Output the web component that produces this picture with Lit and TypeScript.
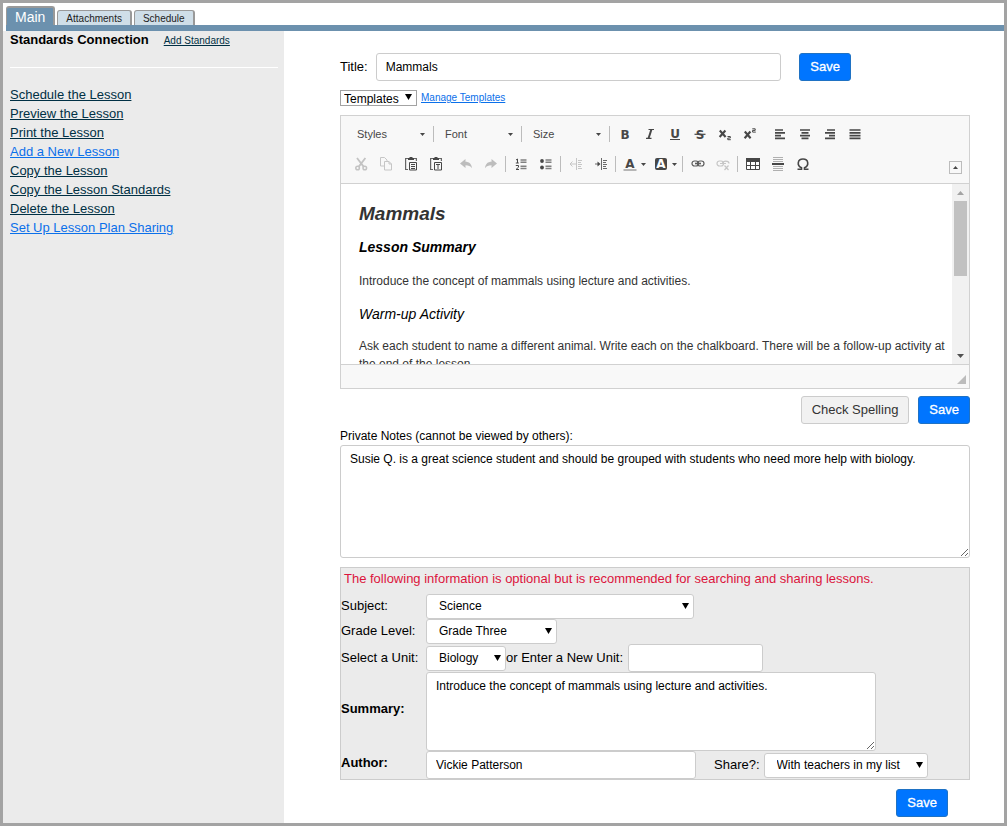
import { LitElement, html, svg, css, nothing } from "lit";
import { customElement, property } from "lit/decorators.js";

const DARK = "#474747";

const icons: Record<string, unknown> = {
  bold: svg`<text class="glyph" x="8" y="12.500">B</text>`,
  italic: svg`<path fill="none" stroke="#474747" stroke-width="1.200" d="M6.500 3.500h5.500M4 12.300h5.500"/><path stroke="#474747" stroke-width="2" d="M9.400 3.500L6.600 12.300"/>`,
  underline: svg`<text class="glyph" x="8" y="11.500">U</text><path stroke="#474747" d="M3 13.500h10"/>`,
  strike: svg`<text class="glyph" x="8" y="12.500">S</text><path stroke="#474747" stroke-width="1.200" d="M2.500 8.300h11"/>`,
  sub: svg`<path fill="none" stroke="#474747" stroke-width="2.100" d="M2.800 4.500l5.800 6.500M8.400 4.500L2.600 11"/><path fill="none" stroke="#474747" stroke-width="1" d="M10.500 10.500h2.800v1.500h-2.500v1.700h3"/>`,
  sup: svg`<path fill="none" stroke="#474747" stroke-width="2.100" d="M2.800 5.500l5.800 6.800M8.400 5.500l-5.800 6.800"/><path fill="none" stroke="#474747" stroke-width="1" d="M10.300 2.800h2.900v1.600h-2.600v1.700h3.200"/>`,
  left: svg`<path stroke="#474747" stroke-width="1.700" d="M3 4h8M3 6.800h10M3 9.600h6M3 12.400h10"/>`,
  center: svg`<path stroke="#474747" stroke-width="1.700" d="M3 4h10M4.500 6.800h7M3 9.600h10M4.500 12.400h7"/>`,
  right: svg`<path stroke="#474747" stroke-width="1.700" d="M5 4h8M3 6.800h10M7 9.600h6M3 12.400h10"/>`,
  justify: svg`<path stroke="#474747" stroke-width="1.700" d="M2.500 4h11M2.500 6.800h11M2.500 9.600h11M2.500 12.400h11"/>`,
  cut: svg`<path fill="none" stroke="#c3c3c3" stroke-width="1.800" d="M4 2l6.600 8.600M12.400 2L5.800 10.600"/><g fill="none" stroke="#c3c3c3" stroke-width="1.500"><circle cx="4.600" cy="12" r="1.800"/><circle cx="11.800" cy="12" r="1.800"/></g>`,
  copy: svg`<g fill="#f8f8f8" stroke="#c6c6c6"><path d="M2.500 1.500h4l2.500 2.500v6h-6.500z"/><path d="M6.500 5.500h4.500l2.500 2.500v6h-7z"/><path fill="none" d="M11 5.500v2.500h2.500"/></g>`,
  paste: svg`<path fill="none" stroke="#666" stroke-width="1.200" d="M5 13.500H2.600v-11h10.800V5"/><path fill="#474747" d="M5 4V2h1.500V1h3v1H11v2z"/><path fill="#f8f8f8" stroke="#474747" d="M6.500 6.500h7v7.500h-7z"/><path stroke="#474747" d="M8 8.500h4M8 10.500h4M8 12.500h4"/>`,
  pasteText: svg`<path fill="none" stroke="#666" stroke-width="1.200" d="M5 13.500H2.600v-11h10.800V5"/><path fill="#474747" d="M5 4V2h1.500V1h3v1H11v2z"/><path fill="#f8f8f8" stroke="#474747" d="M6.500 6.500h7v7.500h-7z"/><path fill="none" stroke="#474747" d="M8 8.500h4M10 8.500v4.500"/>`,
  undo: svg`<path fill="#bdbdbd" d="M2 7.500L7.500 3v2.800c3.600 0 6 2 6.500 6.400-1.500-2.200-3.500-3-6.500-3V12z"/>`,
  redo: svg`<path fill="#bdbdbd" d="M14 7.500L8.500 3v2.800c-3.600 0-6 2-6.500 6.400 1.500-2.200 3.500-3 6.500-3V12z"/>`,
  numbers: svg`<path fill="none" stroke="#474747" d="M3 4l1.500-1v4M2.800 7h3M2.800 9.500h2.700v1.700l-2.500 2.300h3"/><path stroke="#808080" stroke-width="1.500" d="M7.500 4h6M7.500 6.300h6M7.500 10.300h6M7.500 12.600h6"/>`,
  bullets: svg`<circle cx="4" cy="5" r="1.900" fill="#474747"/><circle cx="4" cy="11.500" r="1.900" fill="#474747"/><path stroke="#808080" stroke-width="1.500" d="M7.500 4h6M7.500 6.300h6M7.500 10.300h6M7.500 12.600h6"/>`,
  outdent: svg`<path fill="none" stroke="#c6c6c6" d="M8.500 2v12M2 8h6M4.500 5.500L2 8l2.500 2.500M10 4.500h4M10 6.500h3M10 8.500h4M10 10.500h3M10 12.500h4"/>`,
  indent: svg`<path fill="none" stroke="#6a6a6a" d="M8.500 2v12M2 8h4M10 4.500h4M10 6.500h3M10 8.500h4M10 10.500h3M10 12.500h4"/><path fill="#474747" d="M4.500 5.500L7.500 8l-3 2.500z"/>`,
  color: svg`<text class="glyph" x="8" y="11.500">A</text><path stroke="#a0a0a0" stroke-width="1.500" d="M1.500 14h13"/>`,
  background: svg`<rect x="2" y="2" width="12" height="12" rx="2" fill="#474747"/><text class="glyph light" x="8" y="12">A</text>`,
  link: svg`<g fill="none" stroke="#5c5c5c" stroke-width="1.200"><rect x="2" y="5" width="6.500" height="5" rx="2.500"/><rect x="7.500" y="5" width="6.500" height="5" rx="2.500"/><path stroke-width="1.600" d="M5 7.500h6"/></g>`,
  unlink: svg`<g fill="none" stroke="#c6c6c6" stroke-width="1.200"><rect x="2" y="5" width="6.500" height="5" rx="2.500"/><path d="M9 9.500M7.500 7.500c0-3.300 6.500-3.300 6.500 0M5 7.500h6M9.500 9.500l4 4.500M13.500 9.500l-4 4.500"/></g>`,
  table: svg`<path fill="#fff" stroke="#474747" d="M1.500 2.500h13v11h-13z"/><path fill="#474747" d="M1 2h14v4H1z"/><path stroke="#474747" d="M1.500 9.500h13M5.500 5v8.500M10.500 5v8.500"/>`,
  rule: svg`<path stroke="#b0b0b0" d="M3 1.500h10M3 3.500h10M3 5.500h10M3 10.500h10M3 12.500h10M3 14.500h10"/><path stroke="#474747" stroke-width="2" d="M2 8h12"/>`,
  omega: svg`<path fill="none" stroke="#474747" stroke-width="1.600" d="M2.500 13.200h4v-1.500C1.500 9.500 2.500 3 8 3s6.500 6.500 1.500 8.700v1.500h4"/>`,
};

interface Tool {
  icon: string;
  label: string;
  off?: boolean;
  menu?: boolean;
}

const firstRow: Tool[][] = [
  [
    { icon: "bold", label: "Bold" },
    { icon: "italic", label: "Italic" },
    { icon: "underline", label: "Underline" },
    { icon: "strike", label: "Strikethrough" },
    { icon: "sub", label: "Subscript" },
    { icon: "sup", label: "Superscript" },
  ],
  [
    { icon: "left", label: "Align left" },
    { icon: "center", label: "Center" },
    { icon: "right", label: "Align right" },
    { icon: "justify", label: "Justify" },
  ],
];

const clipboardTools: Tool[][] = [
  [
    { icon: "cut", label: "Cut", off: true },
    { icon: "copy", label: "Copy", off: true },
    { icon: "paste", label: "Paste" },
    { icon: "pasteText", label: "Paste as plain text" },
  ],
  [
    { icon: "undo", label: "Undo", off: true },
    { icon: "redo", label: "Redo", off: true },
  ],
];

const dividedTools: Tool[][] = [
  [
    { icon: "numbers", label: "Numbered list" },
    { icon: "bullets", label: "Bulleted list" },
  ],
  [
    { icon: "outdent", label: "Decrease indent", off: true },
    { icon: "indent", label: "Increase indent" },
  ],
  [
    { icon: "color", label: "Text color", menu: true },
    { icon: "background", label: "Background color", menu: true },
  ],
  [
    { icon: "link", label: "Link" },
    { icon: "unlink", label: "Unlink", off: true },
  ],
  [
    { icon: "table", label: "Table" },
    { icon: "rule", label: "Horizontal line" },
    { icon: "omega", label: "Special character" },
  ],
];

@customElement("lesson-editor")
export class LessonEditor extends LitElement {
  static styles = css`
    :host {
      display: block;
      border: 1px solid #d1d1d1;
      background: #f8f8f8;
    }
    .toolbar {
      display: flex;
      align-items: flex-end;
      justify-content: space-between;
      padding: 3px 7px 4px 7px;
      border-bottom: 1px solid #d1d1d1;
    }
    .row {
      display: flex;
      align-items: center;
      height: 30px;
    }
    .group {
      display: flex;
    }
    .gap {
      width: 5px;
    }
    .sep {
      width: 1px;
      height: 16px;
      margin: 0 2px;
      background: #bcbcbc;
    }
    .tool {
      display: flex;
      align-items: center;
      justify-content: center;
      gap: 3px;
      width: 25px;
      height: 24px;
      padding: 0;
      border: 0;
      background: none;
    }
    .menu {
      width: 31px;
    }
    .icon {
      width: 16px;
      height: 16px;
    }
    .glyph {
      fill: #474747;
      font: bold 12px "DejaVu Sans", Verdana, sans-serif;
      text-anchor: middle;
    }
    .light {
      fill: #fff;
    }
    .caret {
      width: 5px;
      height: 3px;
    }
    .combo {
      display: grid;
      align-items: center;
      width: 83px;
    }
    .combo > * {
      grid-area: 1 / 1;
    }
    .combo .caret {
      justify-self: end;
      margin-right: 6px;
      pointer-events: none;
    }
    .combo select {
      appearance: none;
      width: 100%;
      height: 22px;
      padding: 0 9px;
      border: 0;
      background: none;
      color: #474747;
      font: 11px "Liberation Sans", Arial, sans-serif;
    }
    .collapse {
      display: flex;
      align-items: center;
      justify-content: center;
      width: 13px;
      height: 13px;
      margin-bottom: 5px;
      padding: 0;
      border: 1px solid #bcbcbc;
      background: #f8f8f8;
    }
    .view {
      display: grid;
      grid-template-columns: 1fr 17px;
      height: 180px;
      background: #fff;
    }
    .doc {
      overflow: hidden;
      padding: 19px 6px 0 18px;
      color: #333;
      font-size: 12px;
      line-height: 18px;
      outline: none;
    }
    .doc h1,
    .doc h2,
    .doc h3,
    .doc p {
      margin: 0 0 16px;
      line-height: 18px;
    }
    .doc h1 {
      margin-bottom: 13px;
      font-size: 19px;
      line-height: 22px;
      font-style: italic;
    }
    .doc h2,
    .doc h3 {
      color: #000;
      font-size: 14px;
      font-style: italic;
    }
    .doc p {
      margin-bottom: 15px;
    }
    .doc h3 {
      margin-bottom: 14px;
      font-weight: normal;
    }
    .scroll {
      display: flex;
      flex-direction: column;
      align-items: center;
      background: #f1f1f1;
    }
    .arrow {
      width: 7px;
      height: 4px;
      margin: 7px 0 6px;
    }
    .thumb {
      width: 13px;
      height: 75px;
      margin-bottom: auto;
      background: #c1c1c1;
    }
    .status {
      display: flex;
      align-items: flex-end;
      justify-content: flex-end;
      height: 24px;
      padding: 0 3px 4px;
      box-sizing: border-box;
      border-top: 1px solid #d1d1d1;
    }
    .grip {
      width: 9px;
      height: 9px;
    }
  `;

  private caret() {
    return html`<svg class="caret" viewBox="0 0 5 3" aria-hidden="true"><path fill=${DARK} d="M0 0h5L2.5 3z" /></svg>`;
  }

  private group(tools: Tool[]) {
    return html`<div class="group">
      ${tools.map(
        (t) => html`<button class=${t.menu ? "tool menu" : "tool"} aria-label=${t.label} ?disabled=${!!t.off}>
          <svg class="icon" viewBox="0 0 16 16" aria-hidden="true">${icons[t.icon]}</svg>${t.menu ? this.caret() : nothing}
        </button>`
      )}
    </div>`;
  }

  render() {
    return html`
      <div class="toolbar">
        <div>
          <div class="row">
            ${["Styles", "Font", "Size"].map(
              (name) => html`<div class="combo">
                  <select aria-label=${name}><option>${name}</option></select>${this.caret()}
                </div>
                <span class="sep"></span>`
            )}
            ${this.group(firstRow[0])}<span class="gap"></span>${this.group(firstRow[1])}
          </div>
          <div class="row">
            ${this.group(clipboardTools[0])}<span class="gap"></span>${this.group(clipboardTools[1])}
            ${dividedTools.map((g) => html`<span class="sep"></span>${this.group(g)}`)}
          </div>
        </div>
        <button class="collapse" aria-label="Collapse toolbar">
          <svg class="caret" viewBox="0 0 5 3" aria-hidden="true"><path fill=${DARK} d="M0 3h5L2.5 0z" /></svg>
        </button>
      </div>
      <div class="view">
        <div class="doc" contenteditable="true" role="textbox" aria-multiline="true" aria-label="Lesson plan">
          <h1>Mammals</h1>
          <h2>Lesson Summary</h2>
          <p>Introduce the concept of mammals using lecture and activities.</p>
          <h3>Warm-up Activity</h3>
          <p>
            Ask each student to name a different animal. Write each on the chalkboard. There will be a follow-up
            activity at the end of the lesson.
          </p>
        </div>
        <div class="scroll" aria-hidden="true">
          <svg class="arrow" viewBox="0 0 7 4"><path fill="#a3a3a3" d="M0 4h7L3.500 0z" /></svg>
          <div class="thumb"></div>
          <svg class="arrow" viewBox="0 0 7 4"><path fill="#505050" d="M0 0h7L3.500 4z" /></svg>
        </div>
      </div>
      <div class="status">
        <svg class="grip" viewBox="0 0 9 9" aria-hidden="true"><path fill="#bcbcbc" d="M9 0v9H0z" /></svg>
      </div>
    `;
  }
}

@customElement("drop-down")
export class DropDown extends LitElement {
  static styles = css`
    :host {
      display: inline-grid;
      align-items: center;
      font-size: 12px;
    }
    select,
    svg {
      grid-area: 1 / 1;
    }
    select {
      appearance: none;
      width: 100%;
      height: 25px;
      padding: 0 12px;
      border: 1px solid #ccc;
      border-radius: 3px;
      background: #fff;
      color: #000;
      font: inherit;
    }
    svg {
      justify-self: end;
      width: 7px;
      height: 6px;
      margin: 0 5px 1px 0;
      pointer-events: none;
    }
    :host([compact]) select {
      height: 16px;
      padding: 0 3px;
      border-color: #a3a3a3;
      border-radius: 0;
    }
  `;

  @property() label = "";
  @property() value = "";

  render() {
    return html`<select aria-label=${this.label}><option>${this.value}</option></select>
      <svg viewBox="0 0 7 6" aria-hidden="true"><path d="M0 0h7L3.500 6z" /></svg>`;
  }
}

const lessonLinks = [
  { text: "Schedule the Lesson" },
  { text: "Preview the Lesson" },
  { text: "Print the Lesson" },
  { text: "Add a New Lesson", blue: true },
  { text: "Copy the Lesson" },
  { text: "Copy the Lesson Standards" },
  { text: "Delete the Lesson" },
  { text: "Set Up Lesson Plan Sharing", blue: true },
];

@customElement("app-root")
export class AppRoot extends LitElement {
  static styles = css`
    :host {
      display: flex;
      flex-direction: column;
      box-sizing: border-box;
      min-height: 100vh;
      border: 3px solid #a3a3a3;
      background: #fff;
      color: #000;
      font: 13px/17px "Liberation Sans", Arial, sans-serif;
    }
    .tabs {
      display: flex;
      align-items: flex-end;
      gap: 2px;
      margin-left: 3px;
      padding-top: 3px;
      border-bottom: 6px solid #6c91ae;
    }
    .tab {
      box-sizing: border-box;
      height: 15px;
      padding: 0 8px;
      border: 1px solid #999;
      border-width: 1px 2px 0 1px;
      border-radius: 3px 3px 0 0;
      background: #cfdee8;
      color: #222;
      font-size: 10px;
      line-height: 15px;
      text-decoration: none;
    }
    .current {
      height: 19px;
      border-top-width: 2px;
      background: #6c91ae;
      color: #fff;
      font-size: 14px;
      line-height: 18px;
    }
    .body {
      display: flex;
      flex: 1;
    }
    aside {
      box-sizing: border-box;
      width: 281px;
      padding: 0 6px 0 7px;
      background: #ebebeb;
    }
    .heading {
      display: flex;
      align-items: baseline;
      gap: 15px;
    }
    h2 {
      margin: 0;
      font-size: 13px;
    }
    a {
      color: #003044;
    }
    .blue {
      color: #0b70ea;
    }
    .small {
      font-size: 10px;
    }
    hr {
      height: 1px;
      margin: 18px 0 17px;
      border: 0;
      background: #fff;
    }
    nav {
      display: flex;
      flex-direction: column;
      align-items: flex-start;
      line-height: 19px;
    }
    main {
      flex: 1;
      padding: 22px 34px 6px 56px;
    }
    .title {
      display: flex;
      align-items: center;
      padding-right: 119px;
    }
    .title label {
      padding-bottom: 2px;
    }
    .title input {
      flex: 1;
      margin: 0 18px 0 8px;
    }
    input,
    textarea {
      box-sizing: border-box;
      padding: 4px 9px;
      border: 1px solid #ccc;
      border-radius: 3px;
      background: #fff;
      color: #000;
      font: 12px/18px "Liberation Sans", Arial, sans-serif;
    }
    input {
      height: 28px;
      min-width: 0;
    }
    textarea {
      display: block;
    }
    button {
      height: 28px;
      padding: 0 10px 2px;
      border: 1px solid #1f72c4;
      border-radius: 3px;
      background: #0075ff;
      color: #fff;
      font: inherit;
      -webkit-text-stroke: 0.3px;
    }
    .plain {
      border-color: #ccc;
      background: #f1f1f1;
      color: #333;
      -webkit-text-stroke: 0;
    }
    .templates {
      display: flex;
      align-items: center;
      gap: 4px;
      margin: 8px 0 9px;
    }
    .templates drop-down {
      width: 77px;
    }
    .actions {
      display: flex;
      justify-content: flex-end;
      gap: 9px;
      margin: 7px 0 4px;
    }
    .notes-label {
      display: block;
      font-size: 12px;
    }
    .notes {
      width: 100%;
      height: 113px;
      margin-bottom: 9px;
    }
    fieldset {
      min-width: 0;
      margin: 0;
      padding: 0;
      border: 1px solid #ccc;
      background: #ebebeb;
    }
    .hint {
      margin: 0;
      padding: 2px 3px 7px;
      color: #dc143c;
    }
    .fields {
      display: grid;
      grid-template-columns: 85px 1fr;
      align-items: center;
    }
    .fields span,
    .fields label {
      padding-bottom: 2px;
    }
    .fields .strong {
      padding-bottom: 6px;
      font-weight: bold;
    }
    .line {
      display: flex;
      align-items: center;
    }
    .subject {
      width: 268px;
    }
    .grade {
      width: 131px;
    }
    .unit {
      width: 80px;
    }
    .new-unit {
      width: 135px;
      margin-left: 5px;
    }
    .summary {
      width: 450px;
      height: 79px;
    }
    .author {
      width: 270px;
      margin-right: 18px;
    }
    .share {
      width: 164px;
      margin-left: 4px;
    }
    .final {
      margin: 9px 22px 0 0;
    }
  `;

  render() {
    return html`
      <div class="tabs">
        <a class="tab current" href="#main">Main</a>
        <a class="tab" href="#attachments">Attachments</a>
        <a class="tab" href="#schedule">Schedule</a>
      </div>
      <div class="body">
        <aside>
          <div class="heading">
            <h2>Standards Connection</h2>
            <a class="small" href="#standards">Add Standards</a>
          </div>
          <hr />
          <nav>${lessonLinks.map((l) => html`<a class=${l.blue ? "blue" : ""} href="#lesson">${l.text}</a>`)}</nav>
        </aside>
        <main>
          <div class="title">
            <label for="title">Title:</label>
            <input id="title" .value=${"Mammals"} />
            <button>Save</button>
          </div>
          <div class="templates">
            <drop-down compact label="Templates" value="Templates"></drop-down>
            <a class="blue small" href="#templates">Manage Templates</a>
          </div>
          <lesson-editor></lesson-editor>
          <div class="actions">
            <button class="plain">Check Spelling</button>
            <button>Save</button>
          </div>
          <label class="notes-label" for="notes">Private Notes (cannot be viewed by others):</label>
          <textarea
            id="notes"
            class="notes"
            .value=${"Susie Q. is a great science student and should be grouped with students who need more help with biology."}
          ></textarea>
          <fieldset>
            <p class="hint">The following information is optional but is recommended for searching and sharing lessons.</p>
            <div class="fields">
              <span>Subject:</span>
              <drop-down class="subject" label="Subject" value="Science"></drop-down>
              <span>Grade Level:</span>
              <drop-down class="grade" label="Grade Level" value="Grade Three"></drop-down>
              <span>Select a Unit:</span>
              <div class="line">
                <drop-down class="unit" label="Select a Unit" value="Biology"></drop-down>
                <label for="new-unit">or Enter a New Unit:</label>
                <input id="new-unit" class="new-unit" />
              </div>
              <label class="strong" for="summary">Summary:</label>
              <textarea
                id="summary"
                class="summary"
                .value=${"Introduce the concept of mammals using lecture and activities."}
              ></textarea>
              <label class="strong" for="author">Author:</label>
              <div class="line">
                <input id="author" class="author" .value=${"Vickie Patterson"} />
                <span>Share?:</span>
                <drop-down class="share" label="Share" value="With teachers in my list"></drop-down>
              </div>
            </div>
          </fieldset>
          <div class="actions final"><button>Save</button></div>
        </main>
      </div>
    `;
  }
}
